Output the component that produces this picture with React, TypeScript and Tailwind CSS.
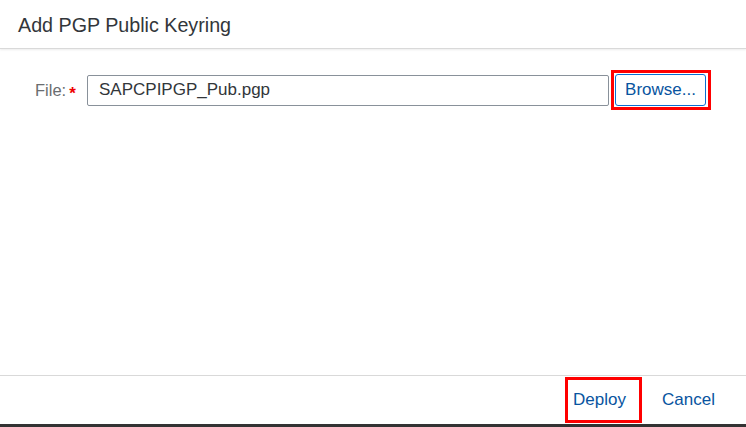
import React from "react";

export default function App() {
  return (
    <div
      className="w-[746px] h-[427px] bg-white flex flex-col text-[#32363a]"
      style={{ fontFamily: '"Liberation Sans", Arial, sans-serif' }}
    >
      {/* ヘッダー */}
      <div className="h-[49px] shrink-0 flex items-center pt-[3px] px-[18px] border-b border-[#d9d9d9] shadow-[0_1px_2px_rgba(0,0,0,0.08)]">
        <h1 className="text-[19.7px] leading-none">Add PGP Public Keyring</h1>
      </div>

      {/* フォーム */}
      <div className="flex-1 pt-[25px] pl-[35px]">
        <div className="flex items-center">
          <label className="text-[16.5px] text-[#6a6d70] flex items-center w-[52px]">
            File:
            <span className="text-[#e00] ml-[3px] text-[17px] font-bold leading-none translate-y-[3px]">*</span>
          </label>
          <div className="w-[522px] h-[31px] border border-[#89919a] rounded-[2px] flex items-center px-[11px] text-[17px]">
            SAPCPIPGP_Pub.pgp
          </div>
          <div className="relative ml-[6px]">
            <button className="w-[91px] h-[32px] border border-[#0a6ed1] rounded-[3px] text-[17px] text-[#0854a0] bg-white">
              Browse...
            </button>
            <div className="absolute -left-[4px] -top-[4px] -right-[5px] -bottom-[4px] border-[3px] border-[#ff0000] pointer-events-none" />
          </div>
        </div>
      </div>

      {/* フッター */}
      <div className="h-[49px] shrink-0 border-t border-[#d9d9d9] flex items-center justify-end pr-[31px]">
        <div className="relative w-[77px] h-[46px] flex items-center">
          <button className="pl-[8px] text-[17px] text-[#0854a0]">Deploy</button>
          <div className="absolute inset-0 border-[3px] border-[#ff0000] pointer-events-none" />
        </div>
        <button className="ml-[20px] text-[17px] text-[#0854a0]">Cancel</button>
      </div>
      <div className="h-[3px] shrink-0 bg-[#333]" />
    </div>
  );
}
